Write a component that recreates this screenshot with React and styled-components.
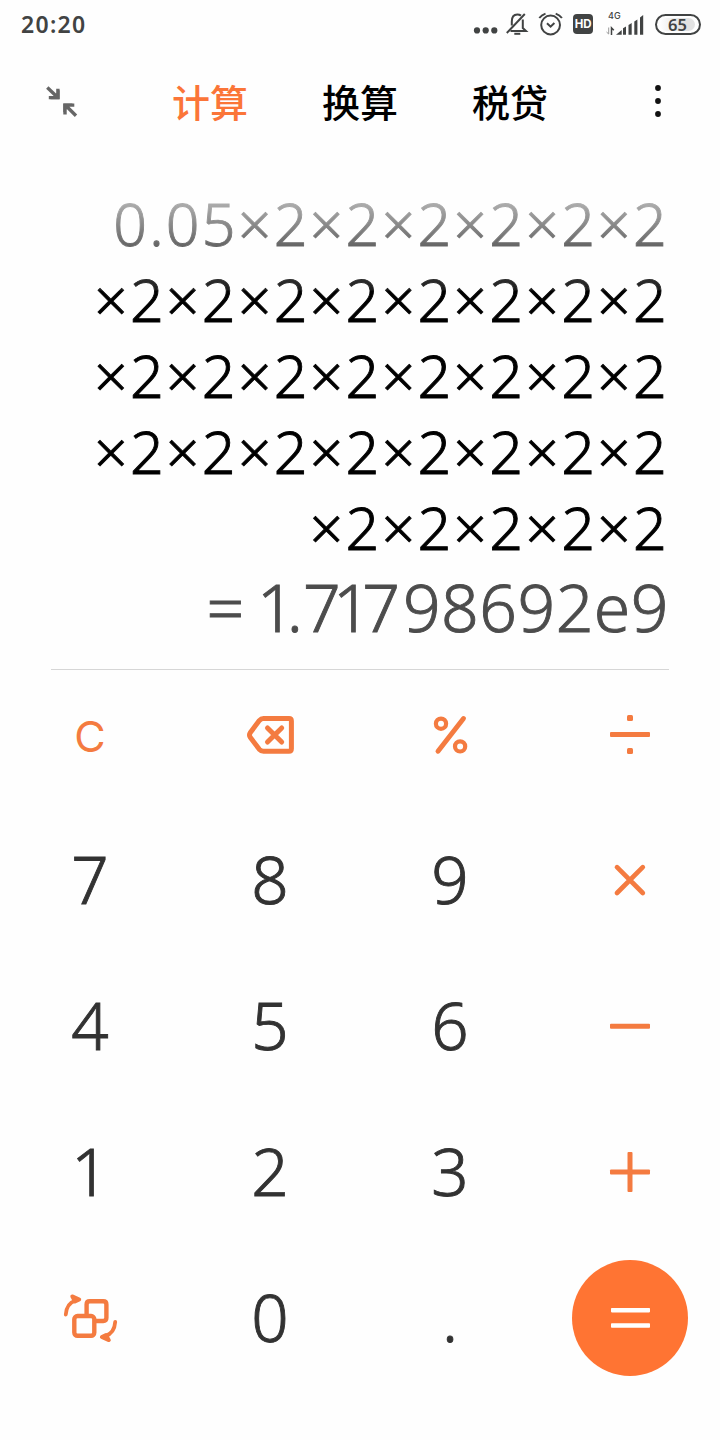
import React from "react";
import styled, { createGlobalStyle } from "styled-components";

const lines = [
    "0.05×2×2×2×2×2×2",
    "×2×2×2×2×2×2×2×2",
    "×2×2×2×2×2×2×2×2",
    "×2×2×2×2×2×2×2×2",
    "×2×2×2×2×2",
];

export default function App() {
    return <Screen>
        <GlobalStyle />
        <StatusBar>
            <Clock>20:20</Clock>
            <StatusIcons />
            <Battery><Charge>65</Charge></Battery>
        </StatusBar>

        <Header>
            <CollapseIcon />
            <Tabs>
                <Tab $active>计算</Tab>
                <Tab>换算</Tab>
                <Tab>税贷</Tab>
            </Tabs>
            <MoreIcon />
        </Header>

        <Display>
            <Expression>
                {lines.map((line, i) => <Line key={i}>{line}</Line>)}
            </Expression>
            <Result>
                <Equals>=</Equals>
                <Kern $by={-8}>1</Kern>
                <Kern $by={0}>.</Kern>
                <Kern $by={-7.5}>7</Kern>
                <Kern $by={-8.5}>1</Kern>
                <Kern $by={3}>7</Kern>
                <Kern $by={0.5}>98692e9</Kern>
            </Result>
        </Display>

        <Keypad>
            <Key><Clear>C</Clear></Key>
            <Key><BackspaceIcon /></Key>
            <Key><PercentIcon /></Key>
            <Key><DivideIcon /></Key>

            <Key><Digit>7</Digit></Key>
            <Key><Digit>8</Digit></Key>
            <Key><Digit>9</Digit></Key>
            <Key><TimesIcon /></Key>

            <Key><Digit>4</Digit></Key>
            <Key><Digit>5</Digit></Key>
            <Key><Digit>6</Digit></Key>
            <Key><MinusIcon /></Key>

            <Key><Digit>1</Digit></Key>
            <Key><Digit>2</Digit></Key>
            <Key><Digit>3</Digit></Key>
            <Key><PlusIcon /></Key>

            <Key><SwitchIcon /></Key>
            <Key><Digit>0</Digit></Key>
            <Key><Digit>.</Digit></Key>
            <Key><EqualsButton><EqualsIcon /></EqualsButton></Key>
        </Keypad>
    </Screen>
}

function StatusIcons() {
    return <StatusRow>
        <svg width="26" height="48" viewBox="473 0 26 48" fill="#414343">
            <circle cx="477" cy="30.4" r="3.1" />
            <circle cx="485.7" cy="30.4" r="3.1" />
            <circle cx="494.3" cy="30.4" r="3.1" />
        </svg>
        <svg width="36" height="48" viewBox="499 0 36 48" fill="none" stroke="#414343" strokeWidth="2">
            <path d="M506.8 33 L524.8 14" />
            <path d="M511.8 25.5 V21.5 C511.8 17 514 14.4 517.3 14.4 C518.8 14.4 520 14.8 521 15.6 M522.8 19.5 V28 L526 31 H510.5" />
            <path d="M514.3 33.8 H520.3" />
        </svg>
        <svg width="35" height="48" viewBox="535 0 35 48" fill="none" stroke="#414343" strokeWidth="2">
            <circle cx="550.6" cy="25" r="9.4" />
            <path d="M547 23.3 L550.6 26.7 L554.4 23.1 M539.3 18 Q541.5 15 545.5 13.6 M561.9 18 Q559.7 15 555.7 13.6" />
        </svg>
        <Hd>HD</Hd>
        <Signal>
            <Network>4G</Network>
            <svg width="39" height="17" viewBox="606 18 39 17" fill="#414343">
                <path d="M608.7 26.5 V33 L606.5 31" stroke="#999" fill="none" />
                <path d="M611.5 34 V26.8 L613.8 29.2" stroke="#414343" strokeWidth="1.5" fill="none" />
                <path d="M616 33.7 L621.7 29 V33.7Z" />
                <path d="M623 33.7 V27.3 L626 25.5 V33.7Z" />
                <path d="M628.5 33.7 V24 L631.7 22 V33.7Z" />
                <path d="M634.3 33.7 V20.5 L637.4 18.5 V33.7Z" />
                <path d="M640 33.7 V16.5 L643.2 14 V33.7Z" />
            </svg>
        </Signal>
    </StatusRow>
}

function CollapseIcon() {
    return <svg width="120" height="60" viewBox="0 72 120 60" fill="none" stroke="#666" strokeWidth="3.4">
        <path d="M47.3 87.5 L57.5 97.2" />
        <path d="M48.8 97.6 H57.9 V88.7" />
        <path d="M54.5 97.6 L57.9 94.2 V97.6Z" />
        <path d="M76 115.7 L65.5 105.3" />
        <path d="M74.3 105.1 H65 V114.5" />
        <path d="M68.5 105.1 L65 108.5 V105.1Z" />
    </svg>
}

function MoreIcon() {
    return <svg width="120" height="60" viewBox="600 72 120 60" fill="#111">
        <circle cx="658" cy="88" r="2.9" />
        <circle cx="658" cy="101" r="2.9" />
        <circle cx="658" cy="114" r="2.9" />
    </svg>
}

function BackspaceIcon() {
    return <Icon viewBox="240 704 60 60">
        <path d="M263.5 718.6 H289 Q291.4 718.6 291.4 721 V748.7 Q291.4 751.2 289 751.2 H263.5 Q261 751.2 259.3 749.3 L250.2 737.3 Q248.8 735 250.2 732.7 L259.3 720.6 Q261 718.6 263.5 718.6Z" />
        <path d="M267.5 728 L281.7 742 M281.7 728 L267.5 742" />
    </Icon>
}

function PercentIcon() {
    return <Icon viewBox="420 704 60 60">
        <circle cx="441" cy="723.7" r="5.1" strokeWidth="4.2" />
        <circle cx="460.1" cy="746.4" r="5.1" strokeWidth="4.2" />
        <path d="M438 751.2 L463.5 718.5" strokeWidth="4.9" />
    </Icon>
}

function DivideIcon() {
    return <Icon viewBox="600 704 60 60">
        <rect x="610" y="732" width="40" height="5" rx="1" fill="#f47b40" stroke="none" />
        <rect x="627" y="715" width="6" height="6" rx="1.5" fill="#f47b40" stroke="none" />
        <rect x="627" y="748" width="6" height="6" rx="1.5" fill="#f47b40" stroke="none" />
    </Icon>
}

function TimesIcon() {
    return <Icon viewBox="600 850 60 60">
        <path d="M617 867.2 L642.8 893 M642.8 867.2 L617 893" strokeWidth="4.7" />
    </Icon>
}

function MinusIcon() {
    return <Icon viewBox="600 996 60 60">
        <rect x="610" y="1023.7" width="40" height="5" rx="1" fill="#f47b40" stroke="none" />
    </Icon>
}

function PlusIcon() {
    return <Icon viewBox="600 1142 60 60">
        <rect x="610" y="1169.5" width="40" height="5" rx="1" fill="#f47b40" stroke="none" />
        <rect x="627.5" y="1152" width="5" height="40" rx="1" fill="#f47b40" stroke="none" />
    </Icon>
}

function SwitchIcon() {
    return <Icon viewBox="60 1288 60 60">
        <path d="M86.6 1314 V1304.5 Q86.6 1301.3 89.8 1301.3 H103.2 Q106.4 1301.3 106.4 1304.5 V1317.8 Q106.4 1321 103.2 1321 H96" strokeWidth="4.4" />
        <rect x="74.3" y="1316" width="20" height="19.8" rx="3.2" strokeWidth="4.4" />
        <path d="M65.8 1314.5 Q66.5 1303.5 75.5 1300.5 M72.2 1296.3 L79.3 1299.5 L75 1301.5Z" strokeWidth="3.8" />
        <path d="M115.2 1321.8 Q114.5 1332.8 105.5 1336 M108.9 1340.2 L101.8 1337 L106 1335Z" strokeWidth="3.8" />
    </Icon>
}

function EqualsIcon() {
    return <svg width="60" height="60" viewBox="600 1288 60 60" fill="#fff">
        <rect x="611" y="1308" width="39" height="4.4" rx="0.8" />
        <rect x="611" y="1323.2" width="39" height="4.6" rx="0.8" />
    </svg>
}

const GlobalStyle = createGlobalStyle`
    body{
        margin: 0;
        background: #fefefe;
    }
    svg{
        display: block;
        flex: none;
    }
`;

const Screen = styled.div`
    width: 720px;
    height: 1440px;
    overflow: hidden;
    background: #fefefe;
    font-family: "Noto Sans", "Noto Sans CJK SC", sans-serif;
`;

const StatusBar = styled.div`
    display: flex;
    align-items: center;
    height: 48px;
    padding: 0 19px 0 21px;
    color: #414343;
`;

const Clock = styled.div`
    flex: 1;
    font-size: 23px;
    line-height: 48px;
    font-weight: 600;
    letter-spacing: 1.3px;
`;

const StatusRow = styled.div`
    display: flex;
    align-items: center;
    margin-right: 10px;
`;

const Hd = styled.div`
    width: 20px;
    height: 20px;
    margin: 0 13px 0 3px;
    border-radius: 4px;
    background: #414343;
    color: #fff;
    font: 700 11.5px/20px "Inter", sans-serif;
    letter-spacing: -0.3px;
    text-align: center;
`;

const Signal = styled.div`
    display: flex;
    flex-direction: column;
    height: 24px;
    width: 39px;
    svg{
        overflow: visible;
    }
`;

const Network = styled.div`
    height: 7px;
    padding-left: 2px;
    font: 500 9px/7px "Inter", sans-serif;
`;

const Battery = styled.div`
    box-sizing: border-box;
    width: 46px;
    height: 21px;
    border: 2px solid #414343;
    border-radius: 11px;
    padding: 2px 4px 2px 3px;
`;

const Charge = styled.div`
    height: 13px;
    border-radius: 7px;
    background: linear-gradient(90deg, #fefefe 0, #e2e2e2 60%);
    font-size: 16.5px;
    line-height: 13px;
    font-weight: 600;
    text-align: center;
`;

const Header = styled.header`
    display: flex;
    align-items: center;
    justify-content: space-between;
    height: 60px;
    margin-top: 24px;
`;

const Tabs = styled.nav`
    display: flex;
    width: 450px;
`;

const Tab = styled.div`
    flex: 1;
    height: 60px;
    color: ${({ $active }) => ($active ? "#fb7538" : "#000")};
    font-family: "Noto Sans CJK SC", sans-serif;
    font-size: 38px;
    line-height: 58px;
    font-weight: 500;
    text-align: center;
`;

const Display = styled.section`
    box-sizing: border-box;
    height: 485px;
    margin: 53px 51px 0;
    border-bottom: 1px solid #d6d6d6;
    text-align: right;
`;

const Expression = styled.div`
    background: linear-gradient(180deg, #cbcbcb 0, #1c1c1c 105px, #000 106px);
    background-clip: text;
    -webkit-background-clip: text;
    -webkit-text-stroke: 0.9px transparent;
    color: transparent;
    font-size: 59px;
    font-weight: 300;
    letter-spacing: 2.25px;
`;

const Line = styled.div`
    height: 76px;
    line-height: 76px;
    white-space: nowrap;
`;

const Result = styled.div`
    display: flex;
    justify-content: flex-end;
    height: 83px;
    line-height: 83px;
    color: #4c4c4c;
    -webkit-text-stroke: 0.9px #4c4c4c;
    font-size: 66px;
    font-weight: 300;
    white-space: nowrap;
`;

const Equals = styled.span`
    margin-right: 13px;
`;

const Kern = styled.span`
    letter-spacing: ${({ $by }) => $by}px;
`;

const Keypad = styled.div`
    display: grid;
    grid-template-columns: repeat(4, 180px);
    grid-auto-rows: 146px;
    margin-top: -9px;
`;

const Key = styled.div`
    display: flex;
    align-items: center;
    justify-content: center;
`;

const Digit = styled.span`
    margin-bottom: 2px;
    color: #323232;
    -webkit-text-stroke: 0.9px #323232;
    font-size: 65.5px;
    line-height: 80px;
    font-weight: 300;
`;

const Clear = styled.span`
    margin-top: 4px;
    color: #f47b40;
    font-family: "Inter", sans-serif;
    font-size: 43px;
    line-height: 60px;
    font-weight: 400;
`;

const Icon = styled.svg.attrs({ width: 60, height: 60 })`
    fill: none;
    stroke: #f47b40;
    stroke-width: 5;
    stroke-linecap: round;
    stroke-linejoin: round;
`;

const EqualsButton = styled.div`
    display: flex;
    align-items: center;
    justify-content: center;
    width: 116px;
    height: 116px;
    border-radius: 50%;
    background: #ff7433;
`;
